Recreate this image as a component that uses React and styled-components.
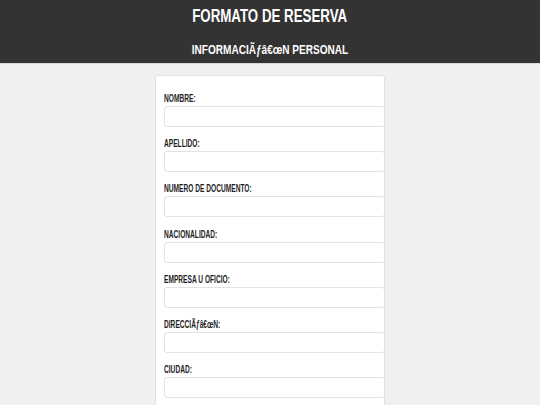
import React from 'react';
import styled, { createGlobalStyle } from 'styled-components';

const GlobalStyle = createGlobalStyle`
  html, body {
    margin: 0;
    padding: 0;
    background: #f0f0f0;
    font-family: "Liberation Sans", Arial, sans-serif;
  }
`;

const Header = styled.header`
  background: #333333;
  border-bottom: 1px solid #d8d8d8;
  height: 63px;
  display: flex;
  flex-direction: column;
  align-items: center;
  color: #ffffff;
`;

// the original face is a narrow grotesque; squeeze Liberation Sans to match
const Narrow = styled.span`
  display: inline-block;
  white-space: nowrap;
  transform: scaleX(${(p) => p.$ratio || 0.7});
  transform-origin: ${(p) => (p.$center ? 'center' : 'left')};
`;

const Title = styled.h1`
  margin: 5px 0 0;
  font-size: 19px;
  line-height: 22px;
  font-weight: bold;
`;

const Subtitle = styled.h2`
  margin: 15px 0 0;
  font-size: 13.5px;
  line-height: 16px;
  font-weight: bold;
`;

const Main = styled.main`
  display: flex;
  justify-content: center;
  padding-top: 11px;
`;

const Card = styled.form`
  box-sizing: border-box;
  width: 230px;
  background: #ffffff;
  border: 1px solid #e0e0e0;
  border-radius: 3px;
  padding: 17px 8px 8px;
`;

const Field = styled.div`
  display: flex;
  flex-direction: column;
  margin-bottom: 11.2px;
`;

const Label = styled.label`
  font-size: 10.5px;
  line-height: 11px;
  font-weight: bold;
  color: #1e1e1e;
  margin-bottom: 2px;
`;

const Input = styled.input`
  box-sizing: border-box;
  width: 221px;
  height: 21px;
  border: 1px solid #e2e2e2;
  border-radius: 3px;
  background: #fff;
  outline: none;
`;

const fields = [
  'NOMBRE:',
  'APELLIDO:',
  'NUMERO DE DOCUMENTO:',
  'NACIONALIDAD:',
  'EMPRESA U OFICIO:',
  'DIRECCIÃƒâ€œN:',
  'CIUDAD:',
];

export default function App() {
  return (
    <>
      <GlobalStyle />
      <Header>
        <Title>
          <Narrow $center>FORMATO DE RESERVA</Narrow>
        </Title>
        <Subtitle>
          <Narrow $center $ratio={0.745}>INFORMACIÃƒâ€œN PERSONAL</Narrow>
        </Subtitle>
      </Header>
      <Main>
        <Card>
          {fields.map((f) => (
            <Field key={f}>
              <Label>
                <Narrow $ratio={0.63}>{f}</Narrow>
              </Label>
              <Input type="text" />
            </Field>
          ))}
        </Card>
      </Main>
    </>
  );
}
